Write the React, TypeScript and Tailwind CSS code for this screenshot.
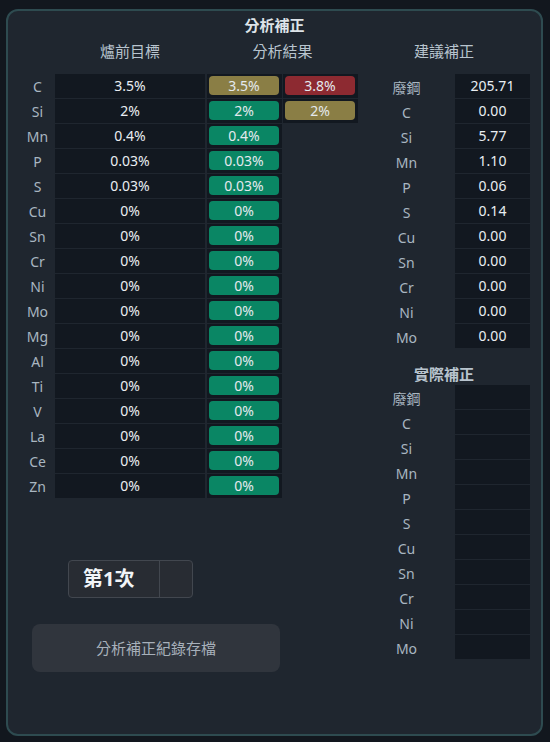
import React from "react";

type Pill = { text: string; tone: "olive" | "red" | "green" };

const elements = [
  "C", "Si", "Mn", "P", "S", "Cu", "Sn", "Cr", "Ni", "Mo", "Mg", "Al", "Ti", "V", "La", "Ce", "Zn",
];

const targets: Record<string, string> = {
  C: "3.5%",
  Si: "2%",
  Mn: "0.4%",
  P: "0.03%",
  S: "0.03%",
};

const results: Record<string, Pill[]> = {
  C: [
    { text: "3.5%", tone: "olive" },
    { text: "3.8%", tone: "red" },
  ],
  Si: [
    { text: "2%", tone: "green" },
    { text: "2%", tone: "olive" },
  ],
  Mn: [{ text: "0.4%", tone: "green" }],
  P: [{ text: "0.03%", tone: "green" }],
  S: [{ text: "0.03%", tone: "green" }],
};

const suggested: [string, string][] = [
  ["廢鋼", "205.71"],
  ["C", "0.00"],
  ["Si", "5.77"],
  ["Mn", "1.10"],
  ["P", "0.06"],
  ["S", "0.14"],
  ["Cu", "0.00"],
  ["Sn", "0.00"],
  ["Cr", "0.00"],
  ["Ni", "0.00"],
  ["Mo", "0.00"],
];

const toneClass = {
  olive: "bg-[#8a7e45]",
  red: "bg-[#8d2a31]",
  green: "bg-[#0a8664]",
};

const PillCell = ({ pill }: { pill?: Pill }) => (
  <div className="w-[75px] h-[24px] bg-[#121820] pl-[2px] pt-[2px]">
    {pill && (
      <div
        className={`w-[70px] h-[19px] rounded-[4px] ${toneClass[pill.tone]} flex items-center justify-center text-[14px] leading-none text-[#e4e9ee]`}
      >
        {pill.text}
      </div>
    )}
  </div>
);

const SideTable = ({ rows }: { rows: [string, string][] }) => (
  <div className="flex flex-col gap-[1px]">
    {rows.map(([label, value]) => (
      <div key={label} className="flex h-[24px]">
        <div className="w-[97px] pt-[2px] text-center text-[14px] leading-[24px] text-[#a9b6c1]">
          {label}
        </div>
        <div className="w-[75px] bg-[#121820] text-center text-[14px] leading-[24px] text-[#e9eef2]">
          {value}
        </div>
      </div>
    ))}
  </div>
);

export default function App() {
  return (
    <div
      className="min-h-[742px] w-[550px] bg-[#12171e] pt-[9px] pl-[6px]"
      style={{ fontFamily: '"Noto Sans", "Noto Sans CJK TC", sans-serif' }}
    >
      <div className="w-[537px] h-[727px] rounded-[12px] border-2 border-[#2e4b50] bg-[#1f262f]">
        <div className="h-[28px] flex items-center justify-center text-[15px] font-bold text-[#dde3e8]">
          分析補正
        </div>

        <div className="flex">
          {/* left: targets and results */}
          <div className="pl-[12px] w-[350px]">
            <div className="flex h-[24px] items-center text-[15px] text-[#b8c4ce]">
              <div className="w-[35px]" />
              <div className="w-[150px] text-center">爐前目標</div>
              <div className="w-[153px] text-center pl-[2px]">分析結果</div>
            </div>

            <div className="mt-[11px] flex flex-col gap-[1px]">
              {elements.map((el) => {
                const pills = results[el] ?? [{ text: "0%", tone: "green" as const }];
                return (
                  <div key={el} className="flex h-[24px]">
                    <div className="w-[35px] text-center text-[14px] leading-[24px] pt-[1px] text-[#a9b6c1]">
                      {el}
                    </div>
                    <div className="w-[150px] bg-[#121820] text-center text-[14px] leading-[24px] text-[#e9eef2]">
                      {targets[el] ?? "0%"}
                    </div>
                    <div className="ml-[2px] flex gap-[1px]">
                      <PillCell pill={pills[0]} />
                      {pills.length > 1 && <PillCell pill={pills[1]} />}
                    </div>
                  </div>
                );
              })}
            </div>

            <div className="ml-[48px] mt-[62px] flex w-[125px] h-[38px] rounded-[4px] border border-[#42474f] bg-[#282c33]">
              <div className="flex-1 pl-[14px] flex items-center text-[20px] font-bold text-[#f1f4f7] border-r border-[#42474f]">
                第1次
              </div>
              <div className="w-[32px]" />
            </div>

            <button className="ml-[12px] mt-[26px] w-[248px] h-[48px] rounded-[8px] bg-[#30353d] text-[15px] text-[#a7b0ba]">
              分析補正紀錄存檔
            </button>
          </div>

          {/* right: suggested and actual corrections */}
          <div className="w-[172px]">
            <div className="h-[24px] flex items-center justify-center text-[15px] text-[#b8c4ce]">
              建議補正
            </div>
            <div className="mt-[11px]">
              <SideTable rows={suggested} />
            </div>
            <div className="h-[37px] pt-[16px] text-center text-[15px] leading-[20px] font-bold text-[#b8c4ce]">
              實際補正
            </div>
            <SideTable rows={suggested.map(([l]) => [l, ""] as [string, string])} />
          </div>
        </div>
      </div>
    </div>
  );
}
